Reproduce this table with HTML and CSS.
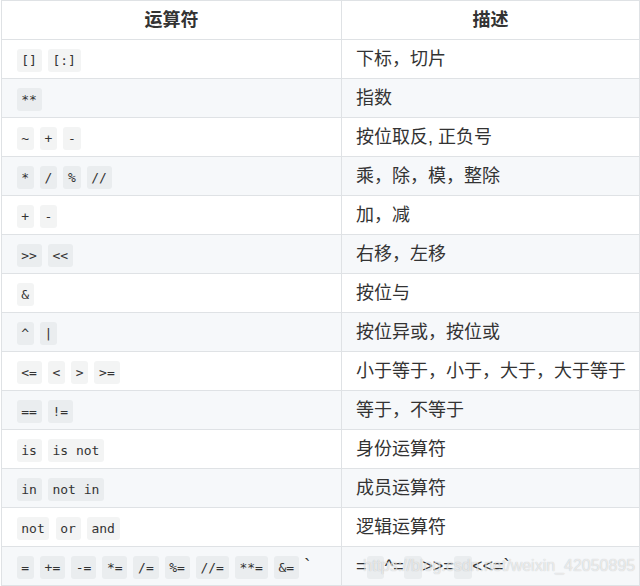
FILE: index.html
```html
<!DOCTYPE html>
<html lang="zh-CN">
<head>
<meta charset="utf-8">
<title>运算符</title>
<link rel="stylesheet" href="styles.css">
</head>
<body>
<table class="ops">
  <colgroup><col class="col-op"><col class="col-desc"></colgroup>
  <thead>
    <tr><th>运算符</th><th>描述</th></tr>
  </thead>
  <tbody>
    <tr><td><code>[]</code> <code>[:]</code></td><td>下标，切片</td></tr>
    <tr><td><code>**</code></td><td>指数</td></tr>
    <tr><td><code>~</code> <code>+</code> <code>-</code></td><td>按位取反, 正负号</td></tr>
    <tr><td><code>*</code> <code>/</code> <code>%</code> <code>//</code></td><td>乘，除，模，整除</td></tr>
    <tr><td><code>+</code> <code>-</code></td><td>加，减</td></tr>
    <tr><td><code>&gt;&gt;</code> <code>&lt;&lt;</code></td><td>右移，左移</td></tr>
    <tr><td><code>&amp;</code></td><td>按位与</td></tr>
    <tr><td><code>^</code> <code>|</code></td><td>按位异或，按位或</td></tr>
    <tr><td><code>&lt;=</code> <code>&lt;</code> <code>&gt;</code> <code>&gt;=</code></td><td>小于等于，小于，大于，大于等于</td></tr>
    <tr><td><code>==</code> <code>!=</code></td><td>等于，不等于</td></tr>
    <tr><td><code>is</code> <code>is not</code></td><td>身份运算符</td></tr>
    <tr><td><code>in</code> <code>not in</code></td><td>成员运算符</td></tr>
    <tr><td><code>not</code> <code>or</code> <code>and</code></td><td>逻辑运算符</td></tr>
    <tr><td><code>=</code> <code>+=</code> <code>-=</code> <code>*=</code> <code>/=</code> <code>%=</code> <code>//=</code> <code>**=</code> <code>&amp;=</code> `</td><td class="last">=<code> </code>^=<code> </code>&gt;&gt;=<code> </code>&lt;&lt;=`<span class="watermark">https://blog.csdn.net/weixin_42050895</span></td></tr>
  </tbody>
</table>
</body>
</html>
```

FILE: styles.css
```css
html, body {
  margin: 0;
  padding: 0;
  background: #ffffff;
}

body {
  padding-left: 1px;
  font-family: "Liberation Sans", "Noto Sans CJK SC", sans-serif;
  color: #333333;
}

.ops {
  border-collapse: collapse;
  table-layout: fixed;
  width: 638px;
}

.col-op { width: 340px; }
.col-desc { width: 298px; }

.ops tr {
  height: 39px;
}

.ops th,
.ops td {
  border: 1px solid #dfe2e5;
  padding: 0 14px;
  line-height: 20px;
  font-size: 18px;
  text-align: left;
  white-space: nowrap;
  overflow: hidden;
  vertical-align: middle;
}

.ops th {
  text-align: center;
  font-weight: 700;
  background: #ffffff;
}

.ops tbody tr:nth-child(even) {
  background: #f6f8fa;
}

.ops code {
  font-family: "DejaVu Sans Mono", "Liberation Mono", monospace;
  font-size: 13px;
  line-height: 1;
  padding: 4px 4.75px;
  margin: 0 0.5px;
  background: rgba(27, 31, 35, 0.05);
  border-radius: 3px;
  color: #333333;
  white-space: pre;
}

.ops td.last {
  position: relative;
}

.watermark {
  position: absolute;
  left: 21px;
  top: 10px;
  font-family: "Liberation Sans", sans-serif;
  font-size: 16px;
  line-height: 18px;
  color: rgba(255, 255, 255, 0.65);
  text-shadow: 0 0 1px rgba(0, 0, 0, 0.25);
  pointer-events: none;
}
```
